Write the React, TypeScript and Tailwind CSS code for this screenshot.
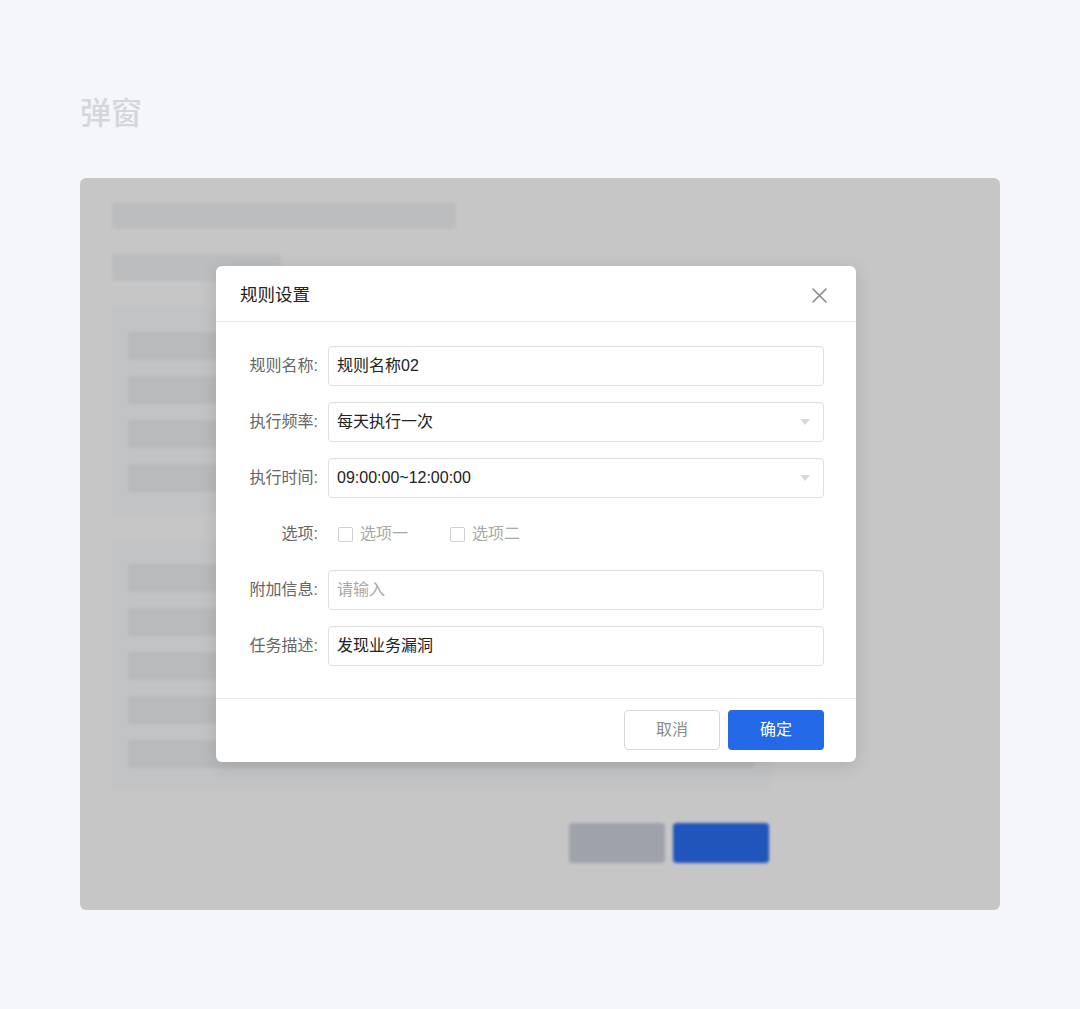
import React from 'react';

const FONT = { fontFamily: '"Liberation Sans", "Noto Sans CJK SC", sans-serif' };

function Field({ label, children }: { label: string; children: React.ReactNode }) {
  return (
    <div className="flex h-10 items-center">
      <div className="w-[78px] shrink-0 text-right text-[16px] text-[#666]">{label}:</div>
      <div className="ml-[10px] flex-1">{children}</div>
    </div>
  );
}

function Input({ value, placeholder, select }: { value?: string; placeholder?: string; select?: boolean }) {
  return (
    <div className="flex h-10 items-center justify-between rounded-[4px] border border-[#dfdfdf] bg-white pl-2 pr-[13px]">
      {value ? (
        <span className="text-[16px] text-[#222]">{value}</span>
      ) : (
        <span className="text-[16px] text-[#a8a8a8]">{placeholder}</span>
      )}
      {select && (
        <svg width="10" height="6" viewBox="0 0 10 6">
          <path d="M0 0 L10 0 L5 6 Z" fill="#d9d9d9" />
        </svg>
      )}
    </div>
  );
}

function Checkbox({ label }: { label: string }) {
  return (
    <div className="flex items-center gap-[7px]">
      <span className="h-[15px] w-[15px] rounded-[2px] border border-[#cfcfcf] bg-white" />
      <span className="text-[16px] text-[#a8a8a8]">{label}</span>
    </div>
  );
}

export default function App() {
  return (
    <main className="min-h-screen bg-[#f5f6fa] px-20 pt-[94px] pb-[99px]" style={FONT}>
      <h1 className="text-[31px] leading-[40px] font-medium text-[#d4d6db]">弹窗</h1>

      {/* masked page behind the dialog */}
      <div className="relative mt-[44px] h-[732px] w-[920px] overflow-hidden rounded-[6px] bg-[#c6c6c6]">
        <div className="flex flex-col px-8 pt-6 blur-[1.5px]">
          <div className="h-[27px] w-[344px] rounded-[3px] bg-[#bcbdbf]" />
          <div className="mt-[25px] h-[27px] w-[169px] rounded-[3px] bg-[#bcbdbf]" />

          <div className="mt-[25px] flex w-[658px] flex-col gap-4 rounded-[3px] bg-[#c2c3c4] px-4 pt-[26px] pb-[22px]">
            <div className="h-7 rounded-[3px] bg-[#b9babc]" />
            <div className="h-7 rounded-[3px] bg-[#b9babc]" />
            <div className="h-7 rounded-[3px] bg-[#b9babc]" />
            <div className="h-7 rounded-[3px] bg-[#b9babc]" />
          </div>

          <div className="mt-[26px] flex w-[658px] flex-col gap-4 rounded-[3px] bg-[#c2c3c4] px-4 pt-6 pb-[22px]">
            <div className="h-7 rounded-[3px] bg-[#b9babc]" />
            <div className="h-7 rounded-[3px] bg-[#b9babc]" />
            <div className="h-7 rounded-[3px] bg-[#b9babc]" />
            <div className="h-7 rounded-[3px] bg-[#b9babc]" />
            <div className="h-7 rounded-[3px] bg-[#b9babc]" />
          </div>

          <div className="mt-[33px] flex w-[657px] justify-end gap-2">
            <div className="h-10 w-24 rounded-[4px] bg-[#9fa2a9]" />
            <div className="h-10 w-24 rounded-[4px] bg-[#2155bb]" />
          </div>
        </div>

        {/* dialog */}
        <div className="absolute top-[88px] left-[136px] w-[640px] rounded-[6px] bg-white shadow-[0_4px_18px_rgba(0,0,0,0.12)]">
          <div className="flex h-[56px] items-center justify-between border-b border-[#e8e8e8] pl-6 pr-[29px] pt-[3px]">
            <span className="text-[17.5px] text-[#222]">规则设置</span>
            <svg width="15" height="15" viewBox="0 0 15 15">
              <path d="M1 1 L14 14 M14 1 L1 14" stroke="#8a8a8a" strokeWidth="1.6" strokeLinecap="round" />
            </svg>
          </div>

          <div className="flex flex-col gap-4 pt-6 pb-8 pl-6 pr-8">
            <Field label="规则名称">
              <Input value="规则名称02" />
            </Field>
            <Field label="执行频率">
              <Input value="每天执行一次" select />
            </Field>
            <Field label="执行时间">
              <Input value="09:00:00~12:00:00" select />
            </Field>
            <Field label="选项">
              <div className="flex items-center gap-[42px] pl-[10px]">
                <Checkbox label="选项一" />
                <Checkbox label="选项二" />
              </div>
            </Field>
            <Field label="附加信息">
              <Input placeholder="请输入" />
            </Field>
            <Field label="任务描述">
              <Input value="发现业务漏洞" />
            </Field>
          </div>

          <div className="flex justify-end gap-2 border-t border-[#e8e8e8] pt-[11px] pr-8 pb-3">
            <button className="h-10 w-24 rounded-[4px] border border-[#d6d6d6] bg-white text-[16px] text-[#8c8c8c]">
              取消
            </button>
            <button className="h-10 w-24 rounded-[4px] bg-[#2469e8] text-[16px] text-white">确定</button>
          </div>
        </div>
      </div>
    </main>
  );
}
